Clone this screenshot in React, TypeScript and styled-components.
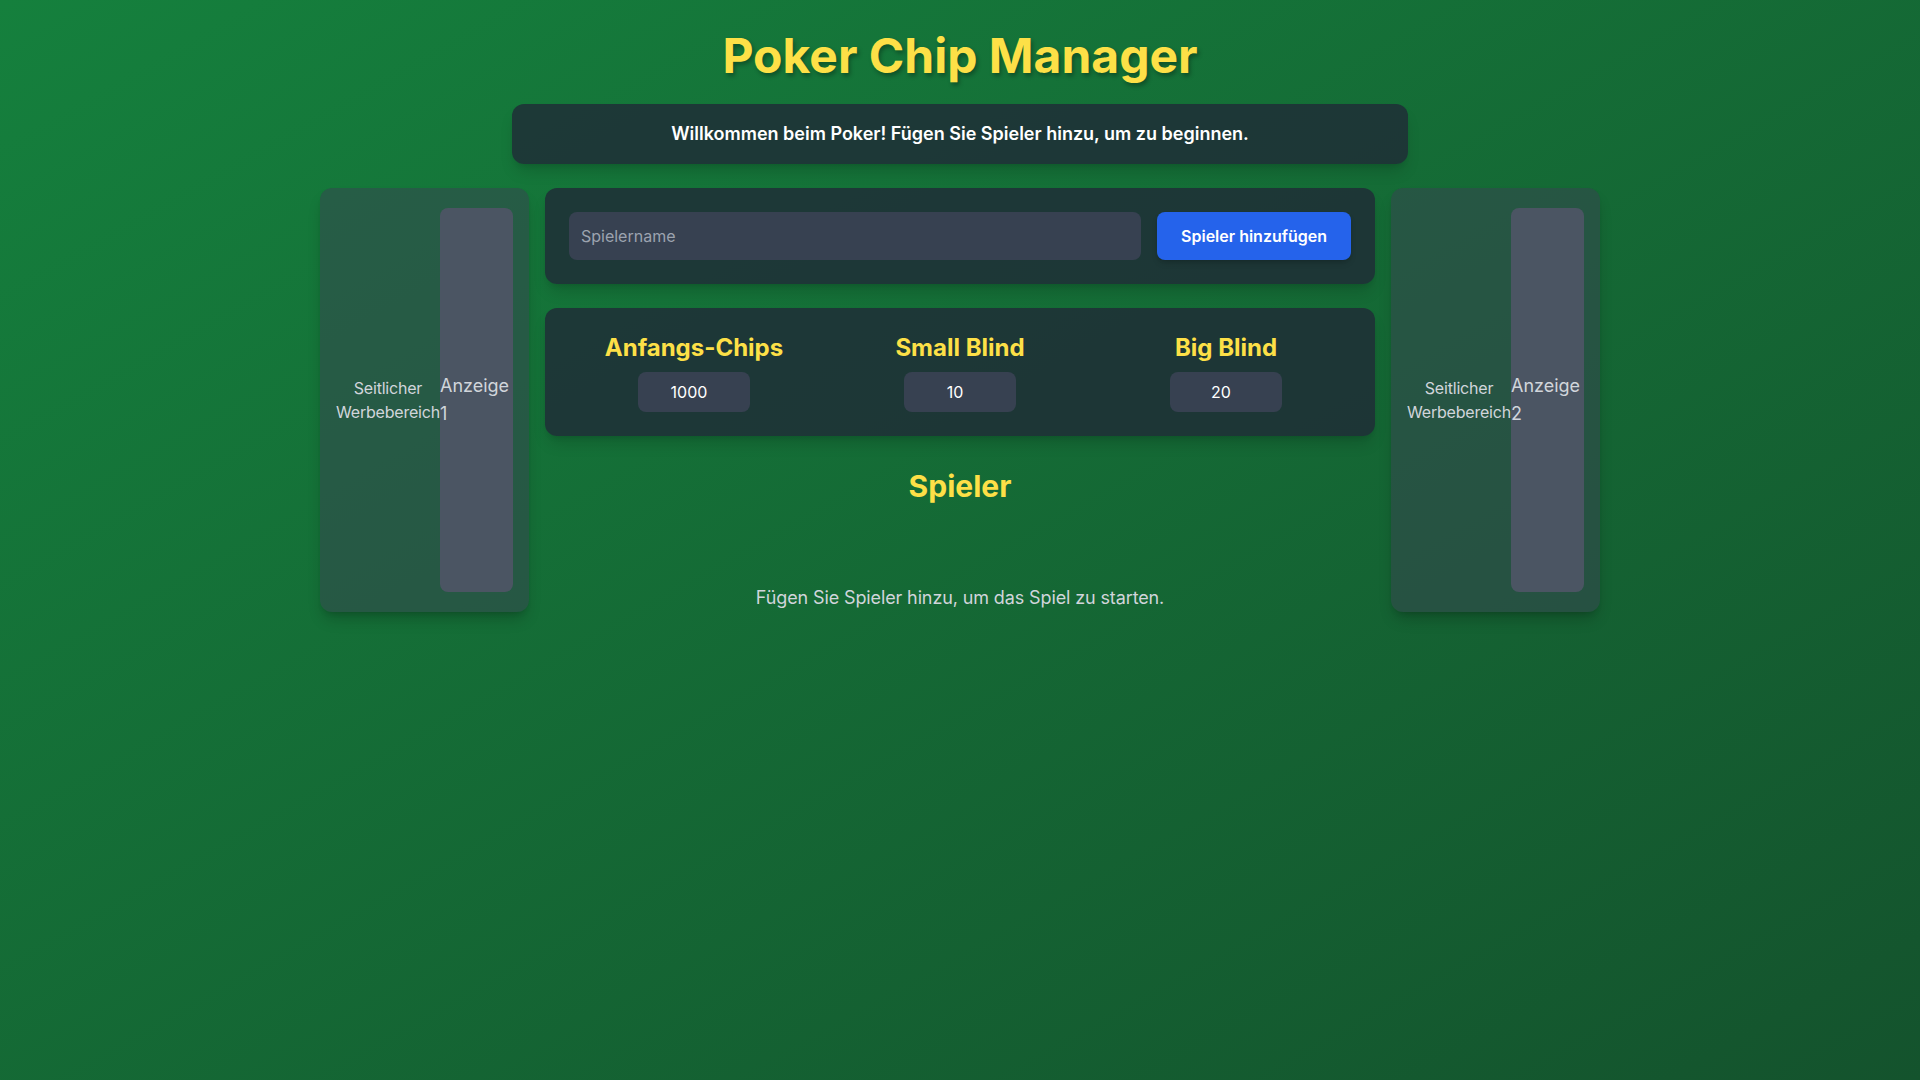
import React from "react";
import styled, { createGlobalStyle } from "styled-components";

const GlobalStyle = createGlobalStyle`
	* {
		box-sizing: border-box;
	}
	body {
		margin: 0;
		font-family: "Inter", "Noto Sans", sans-serif;
	}
	input[type="number"]::-webkit-inner-spin-button {
		opacity: 0;
	}
`;

const Page = styled.div`
	min-height: 100vh;
	padding: 32px;
	background: linear-gradient(to bottom right, #15803d, #14532d);
`;

const Title = styled.h1`
	margin: 0 0 24px;
	font-size: 48px;
	line-height: 48px;
	font-weight: 700;
	text-align: center;
	color: #fde047;
	text-shadow: 2px 3px 4px rgba(0, 0, 0, 0.3);
`;

const Welcome = styled.div`
	max-width: 896px;
	margin: 0 auto 24px;
	padding: 16px;
	border-radius: 12px;
	background: rgba(31, 41, 55, 0.8);
	box-shadow: 0 10px 15px -3px rgba(0, 0, 0, 0.15), 0 4px 6px -4px rgba(0, 0, 0, 0.15);
	color: #ffffff;
	font-size: 18px;
	line-height: 28px;
	font-weight: 600;
	text-align: center;
`;

const Row = styled.div`
	display: flex;
	align-items: flex-start;
	gap: 16px;
	max-width: 1280px;
	margin: 0 auto;
`;

const AdPanel = styled.aside`
	flex: none;
	display: flex;
	align-items: center;
	padding: 20px 16px;
	border-radius: 12px;
	background: rgba(55, 65, 81, 0.5);
	box-shadow: 0 10px 15px -3px rgba(0, 0, 0, 0.2), 0 4px 6px -4px rgba(0, 0, 0, 0.2);
	color: #d1d5db;
	font-size: 16px;
	line-height: 24px;
`;

const AdLabel = styled.span`
	flex: none;
	width: min-content;
	text-align: center;
	letter-spacing: -0.2px;
`;

const AdSlot = styled.div`
	flex: none;
	width: 73px;
	height: 384px;
	display: flex;
	align-items: center;
	border-radius: 8px;
	background: #4b5563;
	font-size: 18px;
	line-height: 28px;
	color: #d1d5db;
`;

const Center = styled.main`
	flex: 1;
	display: flex;
	flex-direction: column;
	gap: 24px;
`;

const Card = styled.section`
	padding: 24px;
	border-radius: 12px;
	background: rgba(31, 41, 55, 0.8);
	box-shadow: 0 10px 15px -3px rgba(0, 0, 0, 0.15), 0 4px 6px -4px rgba(0, 0, 0, 0.15);
`;

const AddRow = styled.div`
	display: flex;
	gap: 16px;
`;

const NameInput = styled.input`
	flex: 1;
	height: 48px;
	padding: 0 12px;
	border: none;
	border-radius: 8px;
	background: #374151;
	color: #ffffff;
	font-family: inherit;
	font-size: 16px;
	outline: none;

	&::placeholder {
		color: #9ca3af;
	}
`;

const AddButton = styled.button`
	height: 48px;
	padding: 0 24px;
	border: none;
	border-radius: 8px;
	background: #2563eb;
	color: #ffffff;
	font-family: inherit;
	font-size: 16px;
	font-weight: 600;
	box-shadow: 0 4px 6px -1px rgba(0, 0, 0, 0.15), 0 2px 4px -2px rgba(0, 0, 0, 0.15);
	cursor: pointer;
`;

const SettingsGrid = styled.div`
	display: grid;
	grid-template-columns: repeat(3, 1fr);
	gap: 16px;
`;

const Setting = styled.div`
	display: flex;
	flex-direction: column;
	align-items: center;
`;

const SettingTitle = styled.h3`
	margin: 0 0 8px;
	font-size: 24px;
	line-height: 32px;
	font-weight: 700;
	color: #fde047;
`;

const NumberInput = styled.input`
	width: 112px;
	height: 40px;
	padding: 0 8px 0 13px;
	border: none;
	border-radius: 8px;
	background: #374151;
	color: #ffffff;
	font-family: inherit;
	font-size: 16px;
	text-align: center;
	outline: none;
`;

const Players = styled.div`
	padding-top: 8px;
	text-align: center;
`;

const PlayersTitle = styled.h2`
	margin: 0 0 16px;
	font-size: 30px;
	line-height: 36px;
	font-weight: 700;
	color: #fde047;
`;

const Empty = styled.p`
	margin: 0;
	padding: 64px 0;
	font-size: 18px;
	line-height: 28px;
	letter-spacing: -0.12px;
	color: #d1d5db;
`;

const settings = [
	{ label: "Anfangs-Chips", value: 1000 },
	{ label: "Small Blind", value: 10 },
	{ label: "Big Blind", value: 20 },
];

function SideAd({ n }: { n: number }) {
	return (
		<AdPanel>
			<AdLabel>Seitlicher Werbebereich</AdLabel>
			<AdSlot>
				<span>Anzeige {n}</span>
			</AdSlot>
		</AdPanel>
	);
}

export default function App() {
	return (
		<>
			<GlobalStyle />
			<Page>
				<Title>Poker Chip Manager</Title>
				<Welcome>Willkommen beim Poker! Fügen Sie Spieler hinzu, um zu beginnen.</Welcome>
				<Row>
					<SideAd n={1} />
					<Center>
						<Card>
							<AddRow>
								<NameInput placeholder="Spielername" />
								<AddButton>Spieler hinzufügen</AddButton>
							</AddRow>
						</Card>
						<Card>
							<SettingsGrid>
								{settings.map((s) => (
									<Setting key={s.label}>
										<SettingTitle>{s.label}</SettingTitle>
										<NumberInput type="number" defaultValue={s.value} />
									</Setting>
								))}
							</SettingsGrid>
						</Card>
						<Players>
							<PlayersTitle>Spieler</PlayersTitle>
							<Empty>Fügen Sie Spieler hinzu, um das Spiel zu starten.</Empty>
						</Players>
					</Center>
					<SideAd n={2} />
				</Row>
			</Page>
		</>
	);
}
